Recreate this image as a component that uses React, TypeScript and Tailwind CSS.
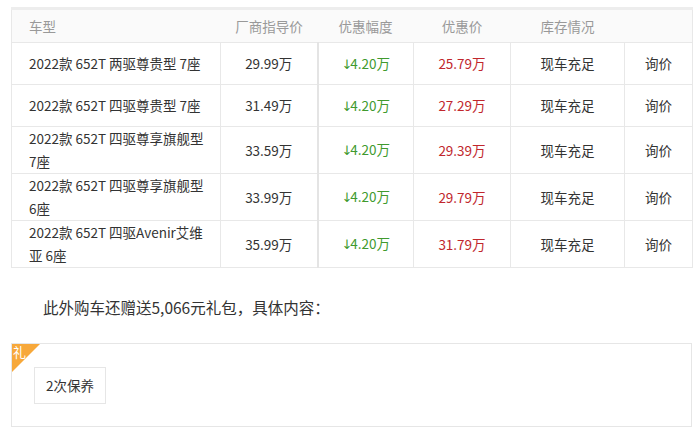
import React from 'react';

const rows = [
  { name: '2022款 652T 两驱尊贵型 7座', msrp: '29.99万', cut: '4.20万', price: '25.79万' },
  { name: '2022款 652T 四驱尊贵型 7座', msrp: '31.49万', cut: '4.20万', price: '27.29万' },
  { name: '2022款 652T 四驱尊享旗舰型 7座', msrp: '33.59万', cut: '4.20万', price: '29.39万' },
  { name: '2022款 652T 四驱尊享旗舰型 6座', msrp: '33.99万', cut: '4.20万', price: '29.79万' },
  { name: '2022款 652T 四驱Avenir艾维亚 6座', msrp: '35.99万', cut: '4.20万', price: '31.79万' },
];

const App = () => {
  return (
    <div
      className="w-[700px] h-[434px] bg-white pt-[7px] pl-[11px] pr-[8px] text-[#333] text-[13.5px]"
      style={{ fontFamily: '"Noto Sans CJK SC", "Noto Sans", sans-serif' }}
    >
      {/* price table */}
      <table className="w-[681px] table-fixed border-collapse border-t-[3px] border-t-[#ededed]">
        <colgroup>
          <col className="w-[209px]" />
          <col className="w-[97px]" />
          <col className="w-[96px]" />
          <col className="w-[97px]" />
          <col className="w-[114px]" />
          <col className="w-[68px]" />
        </colgroup>
        <thead>
          <tr className="h-[34px] bg-[#fafafa] text-[#999] border border-[#e8e8e8]">
            <th className="font-normal text-left pl-[17px]">车型</th>
            <th className="font-normal">厂商指导价</th>
            <th className="font-normal">优惠幅度</th>
            <th className="font-normal">优惠价</th>
            <th className="font-normal">库存情况</th>
            <th className="font-normal"></th>
          </tr>
        </thead>
        <tbody>
          {rows.map((r) => (
            <tr key={r.name} className="h-[42px] border border-[#e8e8e8]">
              <td className="border border-[#e8e8e8] pl-[17px] pr-[14px] py-0 leading-[23px] text-left">{r.name}</td>
              <td className="border-y border-l border-[#e8e8e8] border-r-2 border-r-[#e4e4e4] text-center">{r.msrp}</td>
              <td className="border border-[#e8e8e8] text-center text-[#409a2e]">
                <span className="font-['DejaVu_Sans',sans-serif] text-[13px] tracking-[-2px]">↓</span>
                {r.cut}
              </td>
              <td className="border border-[#e8e8e8] text-center text-[#c1272d]">{r.price}</td>
              <td className="border border-[#e8e8e8] text-center">现车充足</td>
              <td className="border border-[#e8e8e8] text-center">询价</td>
            </tr>
          ))}
        </tbody>
      </table>

      <p className="mt-[27px] indent-[32px] text-[15.5px] leading-[24px]">此外购车还赠送5,066元礼包，具体内容：</p>

      {/* gift box */}
      <div className="relative mt-[24px] w-[681px] h-[84px] border border-[#e6e6e6] pt-[23px] pl-[22px]">
        <div className="absolute left-0 top-0 w-[28px] h-[28px]">
          <svg width="28" height="28" viewBox="0 0 28 28" className="absolute left-0 top-0">
            <polygon points="0,0 28,0 0,28" fill="#f7a83a" />
          </svg>
          <span className="absolute left-[1px] top-[0px] text-white text-[13px] leading-[16px]">礼</span>
        </div>
        <div className="inline-flex items-center justify-center w-[72px] h-[37px] border border-[#e6e6e6] text-[13.5px]">
          2次保养
        </div>
      </div>
    </div>
  );
};

export default App;
